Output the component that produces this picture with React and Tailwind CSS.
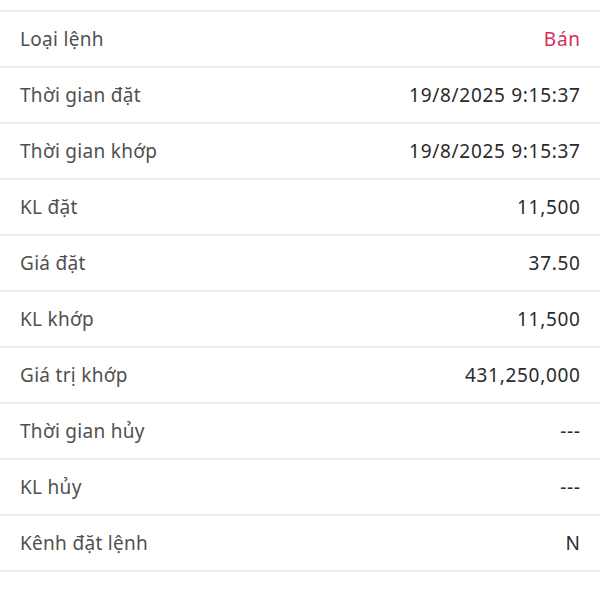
export default function App() {
  const rows = [
    ["Loại lệnh", "Bán", true],
    ["Thời gian đặt", "19/8/2025 9:15:37"],
    ["Thời gian khớp", "19/8/2025 9:15:37"],
    ["KL đặt", "11,500"],
    ["Giá đặt", "37.50"],
    ["KL khớp", "11,500"],
    ["Giá trị khớp", "431,250,000"],
    ["Thời gian hủy", "---"],
    ["KL hủy", "---"],
    ["Kênh đặt lệnh", "N"],
  ];
  return (
    <div className="w-[600px] h-[600px] bg-white pt-[10px]" style={{ fontFamily: "'Noto Sans', sans-serif" }}>
      <div className="border-b-2 border-[#ececec]">
        {rows.map(([l, v, red]) => (
          <div key={l} className="flex items-center justify-between h-[56px] border-t-2 border-[#ececec] px-5 text-[19px]">
            <span className="text-[#505050] tracking-[0.3px]">{l}</span>
            <span className={(red ? "text-[#d22f5b]" : "text-[#2a2a2a]") + " tracking-[0.7px] -mr-[0.7px]"}>{v}</span>
          </div>
        ))}
      </div>
    </div>
  );
}
